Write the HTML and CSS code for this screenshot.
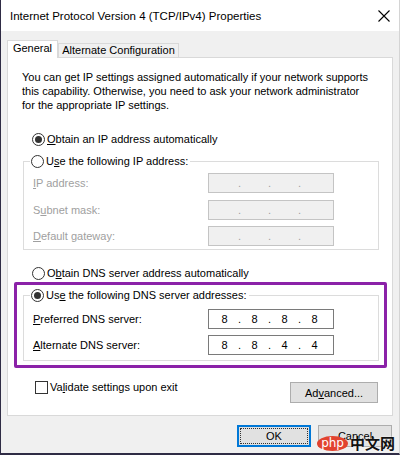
FILE: index.html
```html
<!DOCTYPE html>
<html>
<head>
<meta charset="utf-8">
<link rel="stylesheet" href="styles.css">
</head>
<body>
<div class="window">
  <div class="titlebar">
    <span class="title">Internet Protocol Version 4 (TCP/IPv4) Properties</span>
    <svg class="close" width="12" height="12" viewBox="0 0 12 12"><path d="M0.5 0.5 L11.5 11.5 M11.5 0.5 L0.5 11.5" stroke="#000" stroke-width="1.1" fill="none"/></svg>
  </div>
  <div class="body">
    <div class="tabs">
      <div class="tab active">General</div>
      <div class="tab">Alternate Configuration</div>
    </div>
    <div class="panel">
      <p class="intro">You can get IP settings assigned automatically if your network supports<br>this capability. Otherwise, you need to ask your network administrator<br>for the appropriate IP settings.</p>
      <div class="opt opt-ip"><span class="radio checked"></span><span><u>O</u>btain an IP address automatically</span></div>
      <div class="group g1">
        <div class="legend"><span class="radio"></span><span>U<u>s</u>e the following IP address:</span></div>
        <div class="row disabled r1"><span class="label"><u>I</u>P address:</span>
          <div class="ip"><span></span><span class="dot">.</span><span></span><span class="dot">.</span><span></span><span class="dot">.</span><span></span></div></div>
        <div class="row disabled r2"><span class="label">S<u>u</u>bnet mask:</span>
          <div class="ip"><span></span><span class="dot">.</span><span></span><span class="dot">.</span><span></span><span class="dot">.</span><span></span></div></div>
        <div class="row disabled r3"><span class="label"><u>D</u>efault gateway:</span>
          <div class="ip"><span></span><span class="dot">.</span><span></span><span class="dot">.</span><span></span><span class="dot">.</span><span></span></div></div>
      </div>
      <div class="opt opt-dns"><span class="radio"></span><span>O<u>b</u>tain DNS server address automatically</span></div>
      <div class="highlight">
        <div class="group g2">
          <div class="legend"><span class="radio checked"></span><span>Us<u>e</u> the following DNS server addresses:</span></div>
          <div class="row r1d"><span class="label"><u>P</u>referred DNS server:</span>
            <div class="ip"><span>8</span><span class="dot">.</span><span>8</span><span class="dot">.</span><span>8</span><span class="dot">.</span><span>8</span></div></div>
          <div class="row r2d"><span class="label"><u>A</u>lternate DNS server:</span>
            <div class="ip"><span>8</span><span class="dot">.</span><span>8</span><span class="dot">.</span><span>4</span><span class="dot">.</span><span>4</span></div></div>
        </div>
      </div>
      <div class="bottom">
        <div class="check"><span class="box"></span><span>Va<u>l</u>idate settings upon exit</span></div>
        <div class="btn adv">Ad<u>v</u>anced...</div>
      </div>
    </div>
    <div class="actions">
      <div class="btn ok"><span class="focus">OK</span></div>
      <div class="btn cancel">Cancel</div>
    </div>
  </div>
  <div class="watermark"><span class="php">php</span><span class="cn">中文网</span></div>
</div>
</body>
</html>
```

FILE: styles.css
```css
* { box-sizing: border-box; }
body {
  margin: 0;
  background: #fff;
  font-family: "Liberation Sans", Arial, sans-serif;
  font-size: 11px;
  color: #000;
}
.window {
  width: 400px;
  height: 455px;
  background: #f0f0f0;
  border-left: 1px solid #2f2c45;
  border-right: 1px solid #d4d4d4;
  border-bottom: 2px solid #2f2c45;
  position: relative;
  overflow: hidden;
}
.titlebar {
  height: 31px;
  background: #fff;
  display: flex;
  align-items: center;
  padding-left: 9px;
}
.title { flex: 1; font-size: 11.5px; }
.close { margin-right: 9px; margin-top: 1px; }

.body { padding: 9px 0 0 6px; }

.tabs {
  display: flex;
  align-items: flex-end;
  height: 18px;
  margin-bottom: -1px;
  position: relative;
}
.tab {
  border: 1px solid #d9d9d9;
  border-bottom: none;
  background: #f0f0f0;
  text-align: center;
  height: 14px;
  width: 121px;
  line-height: 13px;
  margin-bottom: 1px;
}
.tab.active {
  background: #fff;
  width: 51px;
  height: 18px;
  line-height: 15px;
  margin-bottom: 0;
}

.panel {
  width: 386px;
  height: 359px;
  background: #fff;
  border: 1px solid #d9d9d9;
  display: flex;
  flex-direction: column;
}
.intro {
  margin: 12px 0 0 14px;
  line-height: 14px;
}
.opt {
  display: flex;
  align-items: center;
  height: 16px;
  gap: 2px;
  padding-left: 24px;
}
.opt-ip { margin-top: 19px; }
.opt-dns { margin-top: 15px; }

.radio {
  width: 13px;
  height: 13px;
  border: 1px solid #333;
  border-radius: 50%;
  background: #fff;
  display: flex;
  align-items: center;
  justify-content: center;
  flex: none;
}
.radio.checked::after {
  content: "";
  width: 7px;
  height: 7px;
  border-radius: 50%;
  background: #333;
}

.group {
  border: 1px solid #dcdcdc;
}
.g1 {
  margin: 14px 13px 0 15px;
  height: 89px;
}
.legend {
  display: flex;
  align-items: center;
  gap: 2px;
  height: 16px;
  width: fit-content;
  background: #fff;
  margin: -9px 0 0 6px;
  padding: 0 2px 0 1px;
}
.row {
  display: flex;
  align-items: center;
  height: 20px;
  padding-left: 9px;
}
.label { width: 175px; }
.r1 { margin-top: 4px; }
.r2 { margin-top: 7px; }
.r3 { margin-top: 6px; }
.disabled .label { color: #a0a0a0; }

.ip {
  width: 126px;
  height: 20px;
  border: 1px solid #7a7a7a;
  background: #fff;
  display: grid;
  grid-template-columns: 27px 3px 27px 3px 27px 3px 27px;
  padding-left: 2px;
  align-items: center;
  text-align: center;
  line-height: 18px;
}
.ip .dot { font-size: 11px; }
.disabled .ip {
  background: #f0f0f0;
  border-color: #c4c4c4;
  color: #a0a0a0;
}

.highlight {
  margin: 1px 5px 0 6px;
  border: 3px solid #8b22a8;
  border-radius: 2px;
  padding-bottom: 4px;
}
.g2 {
  margin: 10px 5px 0 6px;
  padding-bottom: 5px;
}
.r1d { margin-top: 6px; }
.r2d { margin-top: 6px; }

.bottom {
  display: flex;
  justify-content: space-between;
  align-items: flex-start;
  margin: 11px 14px 0 27px;
}
.check {
  display: flex;
  align-items: center;
  gap: 2px;
  height: 16px;
}
.box {
  width: 13px;
  height: 13px;
  border: 1px solid #333;
  background: #fff;
}
.btn {
  height: 21px;
  background: #e1e1e1;
  border: 1px solid #adadad;
  display: flex;
  align-items: center;
  justify-content: center;
}
.adv { width: 88px; margin-top: 3px; }

.actions {
  display: flex;
  justify-content: flex-end;
  gap: 7px;
  margin-top: 9px;
  padding-right: 7px;
}
.actions .btn { width: 74px; height: 22px; }
.ok {
  border: 2px solid #0078d7;
  padding: 1px;
}
.ok .focus {
  width: 100%;
  height: 100%;
  border: 1px dotted #333;
  display: flex;
  align-items: center;
  justify-content: center;
}

.watermark {
  position: absolute;
  right: 4px;
  bottom: 0;
  display: flex;
  align-items: center;
  gap: 2px;
  height: 20px;
}
.php {
  background: #e2432f;
  color: #fff;
  border-radius: 50%;
  font-size: 12px;
  line-height: 15px;
  padding: 0 4px;
  font-family: "DejaVu Sans", sans-serif;
}
.cn {
  font-family: "Noto Sans CJK SC", sans-serif;
  font-size: 15px;
  font-weight: bold;
  color: #111;
  line-height: 18px;
  text-shadow: 0 0 2px #fff;
}
```
